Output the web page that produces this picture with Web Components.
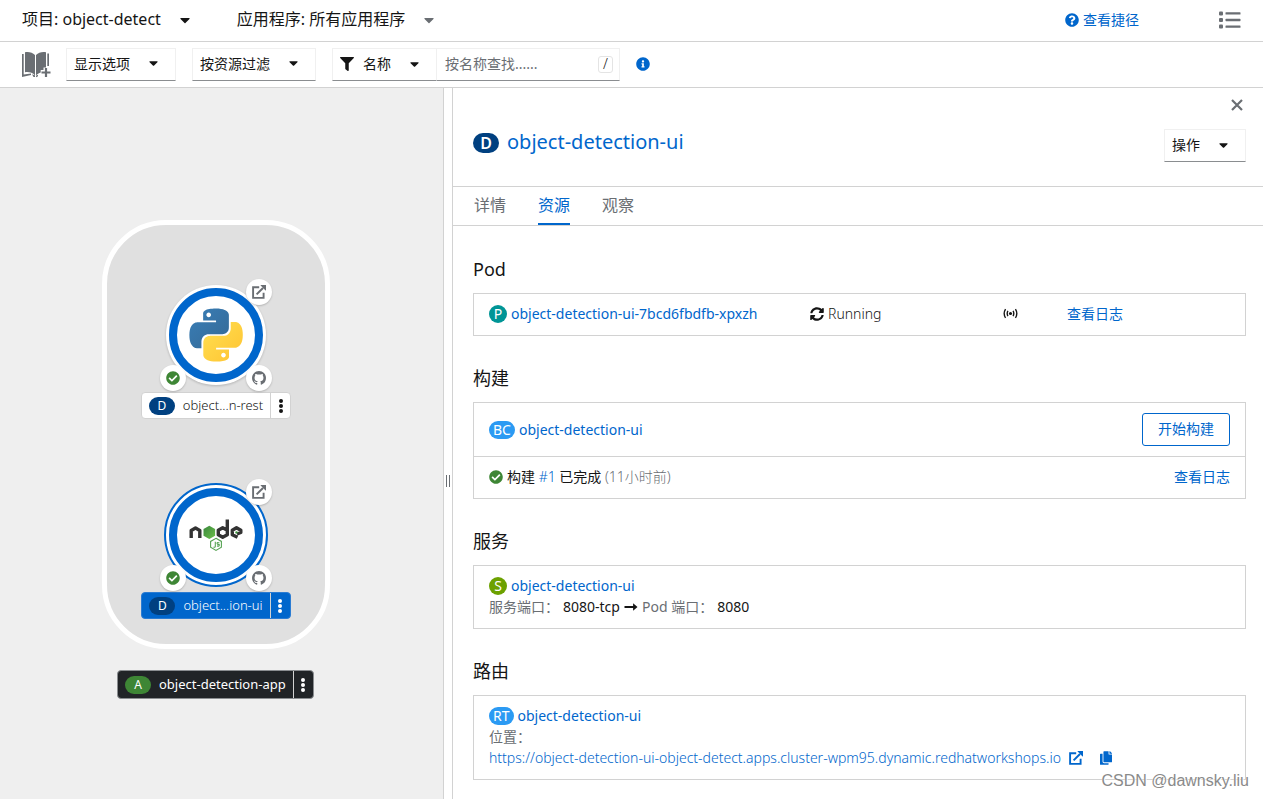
<!DOCTYPE html>
<html lang="zh-CN">
<head>
<meta charset="utf-8">
<meta name="viewport" content="width=device-width, initial-scale=1">
<title>object-detect · 拓扑</title>
<style>
  :root {
    --ink: #151515;
    --muted: #6a6e73;
    --link: #0066cc;
    --line: #d2d2d2;
    --soft: #f0f0f0;
    --ok: #3e8635;
  }
  html { height: 100%; }
  body {
    margin: 0;
    min-height: 100%;
    display: flex;
    flex-direction: column;
    background: #fff;
    color: var(--ink);
    font: 14px/21px "Noto Sans", "Noto Sans CJK SC", sans-serif;
  }
</style>
</head>
<body>
<topology-page></topology-page>

<script>
const BASE = `
  *, *::before, *::after { box-sizing: border-box; }
  a { color: var(--link); text-decoration: none; }
  a:hover { text-decoration: underline; }
  button, input, select { font: inherit; color: inherit; margin: 0; border-radius: 0; }
  button { cursor: pointer; }
  h1, h2, p { margin: 0; font-weight: inherit; }
`;

function define(tag, html, setup) {
  const template = document.createElement('template');
  template.innerHTML = html.replace('<style>', '<style>' + BASE);
  customElements.define(tag, class extends HTMLElement {
    connectedCallback() {
      if (this.shadowRoot) return;
      this.attachShadow({ mode: 'open' }).append(template.content.cloneNode(true));
      if (setup) setup(this, this.shadowRoot);
    }
  });
}

const ICONS = {
  caret: ['0 0 320 512', '<path d="M31.3 192h257.3c17.8 0 26.7 21.5 14.1 34.1L174.1 354.8c-7.8 7.8-20.5 7.8-28.3 0L17.2 226.1C4.6 213.5 13.5 192 31.3 192z"/>'],
  filter: ['0 0 512 512', '<path d="M487.976 0H24.028C2.71 0-8.047 25.866 7.058 40.971L192 225.941V432c0 7.831 3.821 15.17 10.237 19.662l80 55.98C298.02 518.69 320 507.493 320 487.98V225.941l184.947-184.97C520.021 25.896 509.338 0 487.976 0z"/>'],
  question: ['0 0 512 512', '<path d="M504 256c0 136.997-111.043 248-248 248S8 392.997 8 256C8 119.083 119.043 8 256 8s248 111.083 248 248zM262.655 90c-54.497 0-89.255 22.957-116.549 63.758-3.536 5.286-2.353 12.415 2.715 16.258l34.699 26.31c5.205 3.947 12.621 3.008 16.665-2.122 17.864-22.658 30.113-35.797 57.303-35.797 20.429 0 45.698 13.148 45.698 32.958 0 14.976-12.363 22.667-32.534 33.976C247.128 238.528 216 254.941 216 296v4c0 6.627 5.373 12 12 12h56c6.627 0 12-5.373 12-12v-1.333c0-28.462 83.186-29.647 83.186-106.667 0-58.002-60.165-102-116.531-102zM256 338c-25.365 0-46 20.635-46 46 0 25.364 20.635 46 46 46s46-20.636 46-46c0-25.365-20.635-46-46-46z"/>'],
  info: ['0 0 512 512', '<path d="M256 8C119.043 8 8 119.083 8 256c0 136.997 111.043 248 248 248s248-111.003 248-248C504 119.083 392.957 8 256 8zm0 110c23.196 0 42 18.804 42 42s-18.804 42-42 42-42-18.804-42-42 18.804-42 42-42zm56 254c0 6.627-5.373 12-12 12h-88c-6.627 0-12-5.373-12-12v-24c0-6.627 5.373-12 12-12h12v-64h-12c-6.627 0-12-5.373-12-12v-24c0-6.627 5.373-12 12-12h64c6.627 0 12 5.373 12 12v100h12c6.627 0 12 5.373 12 12v24z"/>'],
  check: ['0 0 512 512', '<path d="M504 256c0 136.967-111.033 248-248 248S8 392.967 8 256 119.033 8 256 8s248 111.033 248 248zM227.314 387.314l184-184c6.248-6.248 6.248-16.379 0-22.627l-22.627-22.627c-6.248-6.249-16.379-6.249-22.628 0L216 308.118l-70.059-70.059c-6.248-6.248-16.379-6.248-22.628 0l-22.627 22.627c-6.248 6.248-6.248 16.379 0 22.627l104 104c6.249 6.249 16.379 6.249 22.628.001z"/>'],
  copy: ['0 0 448 512', '<path d="M320 448v40c0 13.255-10.745 24-24 24H24c-13.255 0-24-10.745-24-24V120c0-13.255 10.745-24 24-24h72v296c0 30.879 25.121 56 56 56h168zm0-344V0H152c-13.255 0-24 10.745-24 24v368c0 13.255 10.745 24 24 24h272c13.255 0 24-10.745 24-24V128H344c-13.2 0-24-10.8-24-24zm120.971-31.029L375.029 7.029A24 24 0 0 0 358.059 0H352v96h96v-6.059a24 24 0 0 0-7.029-16.97z"/>'],
  sync: ['0 0 512 512', '<path d="M370.72 133.28C339.458 104.008 298.888 87.962 255.848 88c-77.458.068-144.328 53.178-162.791 126.85-1.344 5.363-6.122 9.15-11.651 9.15H24.103c-7.498 0-13.194-6.807-11.807-14.176C33.933 94.924 134.813 8 256 8c66.448 0 126.791 26.136 171.315 68.685L463.03 40.97C478.149 25.851 504 36.559 504 57.941V192c0 13.255-10.745 24-24 24H345.941c-21.382 0-32.09-25.851-16.971-40.971l41.75-41.749zM32 296h134.059c21.382 0 32.09 25.851 16.971 40.971l-41.75 41.75c31.262 29.273 71.835 45.319 114.876 45.28 77.418-.07 144.315-53.144 162.787-126.849 1.344-5.363 6.122-9.15 11.651-9.15h57.304c7.498 0 13.194 6.807 11.807 14.176C478.067 417.076 377.187 504 256 504c-66.448 0-126.791-26.136-171.315-68.685L48.97 471.03C33.851 486.149 8 475.441 8 454.059V320c0-13.255 10.745-24 24-24z"/>'],
  external: ['0 0 14 14', '<path d="M7.2 2.2H1.1v10.7h10.5V7.8" fill="none" stroke="currentColor" stroke-width="1.9"/><path d="M4.6 9.4 11 3" fill="none" stroke="currentColor" stroke-width="2"/><path d="M8.3.1H14v5.7l-2-1.9-1.9-1.9z"/>'],
  arrow: ['0 0 14 14', '<path d="M.5 6.1h8.6V3.2L13.5 7l-4.4 3.8V7.9H.5z"/>'],
  kebab: ['0 0 6 16', '<circle cx="3" cy="3" r="2"/><circle cx="3" cy="8" r="2"/><circle cx="3" cy="13" r="2"/>'],
  close: ['0 0 12 12', '<path d="m1 1 10 10m0-10-10 10" fill="none" stroke="currentColor" stroke-width="2.2"/>'],
  list: ['0 0 22 18', '<rect y="0.5" width="4" height="4" rx="1"/><rect y="7" width="4" height="4" rx="1"/><rect y="13.5" width="4" height="4" rx="1"/><rect x="6.5" y="1.2" width="15" height="2.4" rx=".6"/><rect x="6.5" y="7.8" width="15" height="2.4" rx=".6"/><rect x="6.5" y="14.4" width="15" height="2.4" rx=".6"/>'],
  signal: ['0 0 16 12', '<circle cx="8" cy="6" r="1.7"/><path d="M5.2 3.2Q3.6 6 5.2 8.8M10.8 3.2Q12.4 6 10.8 8.8M2.6 1.2Q-.4 6 2.6 10.8M13.4 1.2Q16.4 6 13.4 10.8" fill="none" stroke="currentColor" stroke-width="1.5"/>'],
  github: ['0 0 16 16', '<path d="M8 0C3.58 0 0 3.58 0 8c0 3.54 2.29 6.53 5.47 7.59.4.07.55-.17.55-.38 0-.19-.01-.82-.01-1.49-2.01.37-2.53-.49-2.69-.94-.09-.23-.48-.94-.82-1.13-.28-.15-.68-.52-.01-.53.63-.01 1.08.58 1.23.82.72 1.21 1.87.87 2.33.66.07-.52.28-.87.51-1.07-1.78-.2-3.64-.89-3.64-3.95 0-.87.31-1.59.82-2.15-.08-.2-.36-1.02.08-2.12 0 0 .67-.21 2.2.82.64-.18 1.32-.27 2-.27.68 0 1.36.09 2 .27 1.53-1.04 2.2-.82 2.2-.82.44 1.1.16 1.92.08 2.12.51.56.82 1.27.82 2.15 0 3.07-1.87 3.75-3.65 3.95.29.25.54.73.54 1.48 0 1.07-.01 1.93-.01 2.2 0 .21.15.46.55.38A8.013 8.013 0 0 0 16 8c0-4.42-3.58-8-8-8z"/>'],
  book: ['0 0 29 27', '<path d="M0 3h1.7v20.500L9 22.400v1.500L0 26zM27 2.500h-1.700V15H27zM3 1.200C7 .6 10.500 1.400 13 4v20.500C10.500 21.500 7 20.700 3 21.200zM24 1.200C20 .6 16.500 1.400 14 4v20.500c1.200-1.500 2.800-2.500 4.700-3V19h2.800v-2.600H24zM10 23.200l3 1.300v1.600h-1.500zM14 24.800l2-1v1.400l-2 1z"/><path d="M24 17v9M19.500 21.500h9" fill="none" stroke="currentColor" stroke-width="2.2"/>']
};

/* <ui-icon name size>: size is the height; width follows the view box */
define('ui-icon', `
  <style>
    :host { display: inline-flex; flex: none; }
    svg { display: block; fill: currentColor; }
  </style>
  <svg aria-hidden="true"></svg>
`, (host, root) => {
  const [box, body] = ICONS[host.getAttribute('name')];
  const [, , w, h] = box.split(' ').map(Number);
  const size = Number(host.getAttribute('size') || 14);
  const svg = root.querySelector('svg');
  svg.setAttribute('viewBox', box);
  svg.setAttribute('height', size);
  svg.setAttribute('width', Math.round(size * w / h));
  svg.innerHTML = body;
});

/* Coloured pill with the short name of a resource kind */
define('kind-badge', `
  <style>
    :host {
      display: inline-flex; flex: none; align-items: center; justify-content: center;
      min-width: 18px; height: 18px; padding: 0 4px; border-radius: 10px;
      background: var(--badge, #2b9af3); color: #fff; line-height: 18px; font-weight: 400;
    }
    :host([kind="D"]) { --badge: #004080; }
    :host([kind="P"]) { --badge: #009596; }
    :host([kind="S"]) { --badge: #6ca100; }
    :host([kind="A"]) { --badge: #3e8635; }
    :host([large]) { width: 26px; height: 20px; font-size: 16px; font-weight: 600; }
    :host([wide]) { width: 26px; font-size: 12px; }
  </style>
  <slot></slot>
`);

/* Menu button with a caret: boxed by default, bare with [plain] */
define('menu-toggle', `
  <style>
    :host { display: inline-flex; }
    button {
      display: flex; align-items: center; gap: 19px; height: 33px;
      padding: 0 17px 2px 7px; background: #fff;
      border: 1px solid var(--soft); border-bottom-color: #8a8d90;
    }
    ui-icon { color: var(--ink); }
    .big { display: none; }
    :host([plain]) button { border: 0; padding: 0; height: 24px; font-size: 16px; }
    :host([plain]) .big { display: inline-flex; }
    :host([plain]) .small { display: none; }
    :host([muted]) ui-icon { color: var(--muted); }
  </style>
  <button type="button" aria-haspopup="true"><slot></slot><ui-icon class="small" name="caret"></ui-icon><ui-icon class="big" name="caret" size="16"></ui-icon></button>
`);

define('project-bar', `
  <style>
    :host {
      display: flex; align-items: center; gap: 47px; height: 42px;
      padding: 0 22px 2px; border-bottom: 1px solid var(--line);
    }
    a { display: flex; align-items: center; gap: 4px; margin-left: auto; }
    .list { display: flex; padding: 0; border: 0; background: none; color: var(--muted); margin-left: 33px; }
  </style>
  <menu-toggle plain>项目: object-detect</menu-toggle>
  <menu-toggle plain muted>应用程序: 所有应用程序</menu-toggle>
  <a href="#shortcuts"><ui-icon name="question"></ui-icon>查看捷径</a>
  <button class="list" type="button" aria-label="列表视图"><ui-icon name="list" size="18"></ui-icon></button>
`);

define('filter-bar', `
  <style>
    :host {
      display: flex; align-items: center; gap: 16px; height: 46px;
      padding: 0 22px 1px; border-bottom: 1px solid var(--line);
    }
    button { display: flex; padding: 0; border: 0; background: none; color: var(--muted); }
    .book { margin-right: -1px; }
    .info { color: var(--link); }
    .search { display: flex; height: 33px; width: 288px; }
    .search > * { border: 1px solid var(--soft); border-bottom-color: #8a8d90; }
    .by { flex: none; display: grid; align-items: center; width: 104px; border-right: 0; }
    .by > * { grid-area: 1 / 1; }
    .by ui-icon { pointer-events: none; justify-self: start; margin-left: 7px; }
    .by ui-icon:last-child { justify-self: end; margin-right: 17px; }
    select { appearance: none; border: 0; background: none; width: 100%; height: 31px; padding: 0 0 2px 30px; }
    .query { flex: 1; min-width: 0; display: flex; align-items: center; padding-right: 6px; }
    input { flex: 1; min-width: 0; border: 0; padding: 0 8px 2px; height: 31px; background: none; }
    input::placeholder { color: var(--muted); opacity: 1; }
    kbd {
      font: inherit; font-weight: 300; line-height: 14px; width: 15px; height: 17px; text-align: center;
      border: 1px solid #e4e4e4; border-radius: 3px;
    }
  </style>
  <button class="book" type="button" aria-label="添加到项目"><ui-icon name="book" size="27"></ui-icon></button>
  <menu-toggle>显示选项</menu-toggle>
  <menu-toggle>按资源过滤</menu-toggle>
  <div class="search">
    <div class="by">
      <ui-icon name="filter"></ui-icon>
      <select aria-label="过滤类型"><option>名称</option></select>
      <ui-icon name="caret"></ui-icon>
    </div>
    <div class="query">
      <input type="text" aria-label="按名称查找" placeholder="按名称查找......">
      <kbd>/</kbd>
    </div>
  </div>
  <button class="info" type="button" aria-label="信息"><ui-icon name="info"></ui-icon></button>
`);

const PYTHON = `
  <linearGradient id="py-blue" x1="0" y1="0" x2="1" y2="1"><stop offset="0" stop-color="#387eb8"/><stop offset="1" stop-color="#366994"/></linearGradient>
  <linearGradient id="py-gold" x1="0" y1="0" x2="1" y2="1"><stop offset="0" stop-color="#ffe052"/><stop offset="1" stop-color="#ffc331"/></linearGradient>
  <g transform="translate(-26.5 -26.5) scale(2.21)">
    <path fill="url(#py-blue)" d="M14.25.18l.9.2.73.26.59.3.45.32.34.34.25.34.16.33.1.3.04.26.02.2-.01.13V8.5l-.05.63-.13.55-.21.46-.26.38-.3.31-.33.25-.35.19-.35.14-.33.1-.3.07-.26.04-.21.02H8.77l-.69.05-.59.14-.5.22-.41.27-.33.32-.27.35-.2.36-.15.37-.1.35-.07.32-.04.27-.02.21v3.06H3.17l-.21-.03-.28-.07-.32-.12-.35-.18-.36-.26-.36-.36-.35-.46-.32-.59-.28-.73-.21-.88-.14-1.05-.05-1.23.06-1.22.16-1.04.24-.87.32-.71.36-.57.4-.44.42-.33.42-.24.4-.16.36-.1.32-.05.24-.01h.16l.06.01h8.16v-.83H6.18l-.01-2.75-.02-.37.05-.34.11-.31.17-.28.25-.26.31-.23.38-.2.44-.18.51-.15.58-.12.64-.1.71-.06.77-.04.84-.02 1.27.05zm-6.3 1.98l-.23.33-.08.41.08.41.23.34.33.22.41.09.41-.09.33-.22.23-.34.08-.41-.08-.41-.23-.33-.33-.22-.41-.09-.41.09z"/>
    <path fill="url(#py-gold)" d="M21.1 6.11l.28.06.32.12.35.18.36.27.36.35.35.47.32.59.28.73.21.88.14 1.04.05 1.23-.06 1.23-.16 1.04-.24.86-.32.71-.36.57-.4.45-.42.33-.42.24-.4.16-.36.09-.32.05-.24.02-.16-.01h-8.22v.82h5.84l.01 2.76.02.36-.05.34-.11.31-.17.29-.25.25-.31.24-.38.2-.44.17-.51.15-.58.13-.64.09-.71.07-.77.04-.84.01-1.27-.04-1.07-.14-.9-.2-.73-.25-.59-.3-.45-.33-.34-.34-.25-.34-.16-.33-.1-.3-.04-.25-.02-.2.01-.13v-5.34l.05-.64.13-.54.21-.46.26-.38.3-.32.33-.24.35-.2.35-.14.33-.1.3-.06.26-.04.21-.02.13-.01h5.84l.69-.05.59-.14.5-.21.41-.28.33-.32.27-.35.2-.36.15-.36.1-.35.07-.32.04-.28.02-.21V6.07h2.09l.14.01zm-6.47 14.25l-.23.33-.08.41.08.41.23.33.33.23.41.08.41-.08.33-.23.23-.33.08-.41-.08-.41-.23-.33-.33-.23-.41-.08-.41.08z"/>
  </g>`;

const NODEJS = `
  <g fill="none" stroke="#333" stroke-width="3.4" stroke-linejoin="round">
    <path d="M-24.800 3V-4.500L-20.500-7-16.200-4.500V3"/>
    <path d="M11.300-15.500V-4.700L6.700-7.200 2.300-4.700V-.200L6.700 2.200 11.300-.200V-5"/>
    <path d="M21.500 2.200 16.300-.300V-4.700L20.500-7.200 24.800-4.700V-2.500L21-1"/>
  </g>
  <linearGradient id="node-green" x1="0" y1="0" x2="1" y2="1"><stop offset="0" stop-color="#3a873d"/><stop offset="1" stop-color="#6cc04a"/></linearGradient>
  <path fill="url(#node-green)" d="M-6.700-9.300-.900-6V.700L-6.700 4-12.500.700V-6z"/>
  <circle cx="20.500" cy="-2.600" r="1.200" fill="#3e963f"/>
  <g fill="none" stroke="#57a353" stroke-width="1.1">
    <path d="M0 3.300 5.400 6.400V12.300L0 15.400-5.400 12.300V6.400z"/>
    <path d="M-.700 6.800v4.700q-.100 1.100-1.800.600M3.400 7.900Q1 7 1 8.300T3.200 9.600Q3.700 11.700 1 10.900"/>
  </g>`;

/* Workload circle with link and status decorators on its rim */
define('workload-node', `
  <style>
    :host { display: block; width: 112px; height: 112px; }
    svg { display: block; overflow: visible; }
    .halo { fill: #fff; filter: drop-shadow(0 1px 1px rgba(3, 3, 3, .2)); }
    .wrap { position: relative; }
    .deco {
      position: absolute; display: flex; align-items: center; justify-content: center;
      width: 26px; height: 26px; padding: 0; border: 0; border-radius: 50%;
      background: #fff; color: var(--muted); box-shadow: 0 1px 2px rgba(3, 3, 3, .2);
    }
    .open { right: 0; top: 0; }
    .build { left: 0; bottom: 0; color: var(--ok); }
    .source { right: 0; bottom: 0; }
  </style>
  <div class="wrap">
    <svg width="112" height="112" viewBox="-56 -56 112 112" role="img">
      <circle class="rim" r="51" fill="#fff" stroke="#0066cc" stroke-width="2"/>
      <circle class="halo" r="50"/>
      <circle r="43" fill="none" stroke="#0066cc" stroke-width="8"/>
      <g class="logo"></g>
    </svg>
    <a class="deco open" href="#open" aria-label="打开 URL"><ui-icon name="external"></ui-icon></a>
    <button class="deco build" type="button" aria-label="构建完成"><ui-icon name="check"></ui-icon></button>
    <a class="deco source" href="#source" aria-label="源代码"><ui-icon name="github"></ui-icon></a>
  </div>
`, (host, root) => {
  const logo = host.getAttribute('logo');
  root.querySelector('.logo').innerHTML = logo === 'python' ? PYTHON : NODEJS;
  root.querySelector('svg').setAttribute('aria-label', logo);
  root.querySelector(host.hasAttribute('selected') ? '.halo' : '.rim').remove();
});

define('node-label', `
  <style>
    :host {
      display: inline-flex; height: 27px; border: 1px solid #d2d2d2; border-radius: 4px;
      background: #fff; color: var(--ink); font-size: 13px; font-weight: 300; white-space: nowrap;
    }
    :host([tone="blue"]) { background: #0066cc; border-color: #2b7cd3; color: #fff; }
    :host([tone="dark"]) { background: #212427; border-color: #8a8d90; color: #fff; height: 29px; font-weight: 400; }
    .name { display: flex; align-items: center; gap: 8px; padding: 0 7px; }
    button {
      display: flex; align-items: center; justify-content: center; width: 20px; padding: 0;
      border: 0; border-left: 1px solid #d2d2d2; background: none; color: inherit;
    }
  </style>
  <span class="name"><kind-badge wide></kind-badge><slot></slot></span>
  <button type="button" aria-label="操作"><ui-icon name="kebab" size="16"></ui-icon></button>
`, (host, root) => {
  const badge = root.querySelector('kind-badge');
  badge.setAttribute('kind', host.getAttribute('kind'));
  badge.textContent = host.getAttribute('kind');
});

/* Free canvas of the topology graph */
define('topology-canvas', `
  <style>
    :host { display: block; position: relative; overflow: hidden; background: #efefef; }
    .app {
      position: absolute; left: 102px; top: 132px; width: 228px; height: 429px;
      display: flex; flex-direction: column; align-items: center;
      padding-top: 54px; background: #e0e0e0; border: 5px solid #fff; border-radius: 64px;
    }
    .item { flex: none; display: flex; flex-direction: column; align-items: center; gap: 1px; height: 200px; }
    .app-label { position: absolute; left: 117px; top: 582px; }
  </style>
  <div class="app">
    <div class="item">
      <workload-node logo="python"></workload-node>
      <node-label kind="D">object...n-rest</node-label>
    </div>
    <div class="item">
      <workload-node logo="nodejs" selected></workload-node>
      <node-label kind="D" tone="blue">object...ion-ui</node-label>
    </div>
  </div>
  <node-label class="app-label" kind="A" tone="dark">object-detection-app</node-label>
`);

define('split-handle', `
  <style>
    :host {
      display: flex; align-items: center; justify-content: center; padding-top: 74px;
      border: solid var(--line); border-width: 0 1px; background: #fff; cursor: col-resize;
    }
    i { width: 4px; height: 12px; border: solid var(--muted); border-width: 0 1px; }
  </style>
  <i></i>
`);

define('resource-section', `
  <style>
    :host { display: block; padding-top: 29px; }
    h2 { font-size: 18px; line-height: 27px; margin-bottom: 10px; }
    .card { border: 1px solid var(--line); }
    ::slotted(*) { display: block; padding: 9px 15px 11px; }
    ::slotted(.roomy) { padding: 10px 15px; }
    ::slotted(.ruled) { border-top: 1px solid var(--line); }
  </style>
  <h2></h2>
  <div class="card"><slot></slot></div>
`, (host, root) => { root.querySelector('h2').textContent = host.getAttribute('heading'); });

define('detail-panel', `
  <style>
    :host { display: block; min-width: 0; background: #fff; }
    header { display: flex; flex-direction: column; height: 99px; padding: 11px 17px 0 20px; border-bottom: 1px solid var(--line); }
    .close { align-self: flex-end; display: flex; margin-right: 3px; padding: 0; border: 0; background: none; color: var(--muted); }
    .title { display: flex; justify-content: space-between; align-items: flex-start; margin-top: 18px; }
    h1 { display: flex; align-items: center; gap: 8px; height: 28px; font-size: 20px; line-height: 24px; }
    h1 a { padding-bottom: 2px; }
    nav { display: flex; gap: 32px; height: 39px; padding: 0 21px; border-bottom: 1px solid var(--line); }
    nav a { display: block; height: 38px; line-height: 36px; font-size: 16px; color: var(--muted); }
    nav a[aria-current] { color: var(--link); border-bottom: 2px solid var(--link); }
    main { padding: 1px 17px 19px 20px; }
    .line { display: flex; align-items: center; gap: 4px; min-height: 21px; }
    .between { justify-content: space-between; }
    .pod { display: grid; grid-template-columns: 321fr 193fr 64fr 163fr; align-items: center; }
    .pod > * { min-width: 0; }
    .start {
      height: 33px; padding: 0 15px 2px; color: var(--link); background: #fff;
      border: 1px solid var(--link); border-radius: 3px;
    }
    .muted { color: var(--muted); }
    .light { font-weight: 300; }
    .ok { color: var(--ok); }
    .address { gap: 8px; }
    .copy { display: flex; margin-left: 9px; padding: 0; border: 0; background: none; color: var(--link); }
  </style>
  <header>
    <button class="close" type="button" aria-label="关闭"><ui-icon name="close" size="12"></ui-icon></button>
    <div class="title">
      <h1><kind-badge kind="D" large>D</kind-badge><a href="#deployment">object-detection-ui</a></h1>
      <menu-toggle>操作</menu-toggle>
    </div>
  </header>
  <nav>
    <a href="#details">详情</a>
    <a href="#resources" aria-current="page">资源</a>
    <a href="#observe">观察</a>
  </nav>
  <main>
    <resource-section heading="Pod">
      <div><div class="pod">
        <span class="line"><kind-badge kind="P">P</kind-badge><a href="#pod">object-detection-ui-7bcd6fbdfb-xpxzh</a></span>
        <span class="line light"><ui-icon name="sync"></ui-icon>Running</span>
        <span class="line"><ui-icon name="signal" size="11"></ui-icon></span>
        <a href="#pod-log">查看日志</a>
      </div></div>
    </resource-section>
    <resource-section heading="构建">
      <div class="roomy"><div class="line between">
        <span class="line"><kind-badge kind="BC">BC</kind-badge><a href="#build-config">object-detection-ui</a></span>
        <button class="start" type="button">开始构建</button>
      </div></div>
      <div class="ruled"><div class="line between">
        <span class="line"><ui-icon class="ok" name="check"></ui-icon><span>构建 <a class="light" href="#build-1">#1</a> 已完成 <span class="muted light">(11小时前)</span></span></span>
        <a href="#build-log">查看日志</a>
      </div></div>
    </resource-section>
    <resource-section heading="服务">
      <div>
        <div class="line"><kind-badge kind="S">S</kind-badge><a href="#service">object-detection-ui</a></div>
        <div class="line"><span class="muted">服务端口：</span><span>8080-tcp</span><ui-icon name="arrow"></ui-icon><span class="muted">Pod 端口：</span><span>8080</span></div>
      </div>
    </resource-section>
    <resource-section heading="路由">
      <div>
        <div class="line"><kind-badge kind="RT">RT</kind-badge><a href="#route">object-detection-ui</a></div>
        <div class="line muted">位置：</div>
        <div class="line address">
          <a class="line address light" href="#location">https://object-detection-ui-object-detect.apps.cluster-wpm95.dynamic.redhatworkshops.io<ui-icon name="external"></ui-icon></a>
          <button class="copy" type="button" aria-label="复制"><ui-icon name="copy"></ui-icon></button>
        </div>
      </div>
    </resource-section>
  </main>
`);

define('topology-page', `
  <style>
    :host { flex: 1; display: flex; flex-direction: column; position: relative; }
    .split { flex: 1; display: grid; grid-template-columns: minmax(0, 443fr) 10px minmax(0, 810fr); }
    .credit {
      position: absolute; right: 14px; bottom: 8px; font: 16px/21px "Liberation Sans", sans-serif;
      color: #8a8a8a; text-shadow: 0 0 1px #fff, 1px 1px 0 #fff;
    }
  </style>
  <project-bar></project-bar>
  <filter-bar></filter-bar>
  <div class="split">
    <topology-canvas></topology-canvas>
    <split-handle></split-handle>
    <detail-panel></detail-panel>
  </div>
  <span class="credit">CSDN @dawnsky.liu</span>
`);
</script>
</body>
</html>
